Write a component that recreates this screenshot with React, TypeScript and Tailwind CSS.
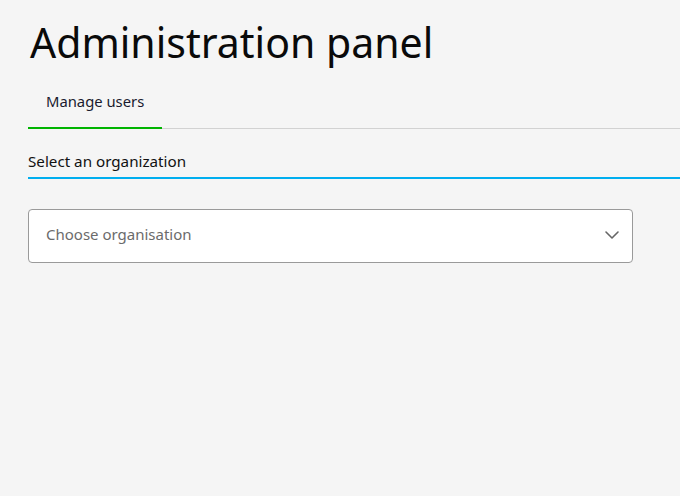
export default function App() {
  return (
    <div className="min-h-[496px] w-[680px] bg-[#f5f5f5] pl-[28px] pt-[15px] text-black" style={{ fontFamily: '"Noto Sans", sans-serif' }}>
      <h1 className="ml-[2px] text-[41px] leading-[54px] font-normal text-[#0a0a0a]">Administration panel</h1>
      <div className="mt-[22px] flex border-b border-[#d2d2d2]">
        <div className="-mb-px w-[134px] border-b-2 border-[#00b400] pb-[16px] pl-[18px] text-[14.8px] leading-[20px] text-[#1a1a2e]">Manage users</div>
      </div>
      <div className="mt-[22px] border-b-2 border-[#00aeef] pb-[6px] text-[15.2px] leading-[20px] text-[#111]">Select an organization</div>
      <div className="mt-[30px] flex h-[54px] w-[605px] items-center justify-between rounded-[4px] border border-[#9a9a9a] bg-white pb-[3px] pl-[17px] pr-[12px]">
        <span className="text-[15px] text-[#6b6b6b]">Choose organisation</span>
        <svg width="16" height="10" viewBox="0 0 16 10" fill="none" stroke="#666" strokeWidth="1.6" strokeLinecap="round" strokeLinejoin="round">
          <path d="M2 2 L8 8 L14 2" />
        </svg>
      </div>
    </div>
  );
}
